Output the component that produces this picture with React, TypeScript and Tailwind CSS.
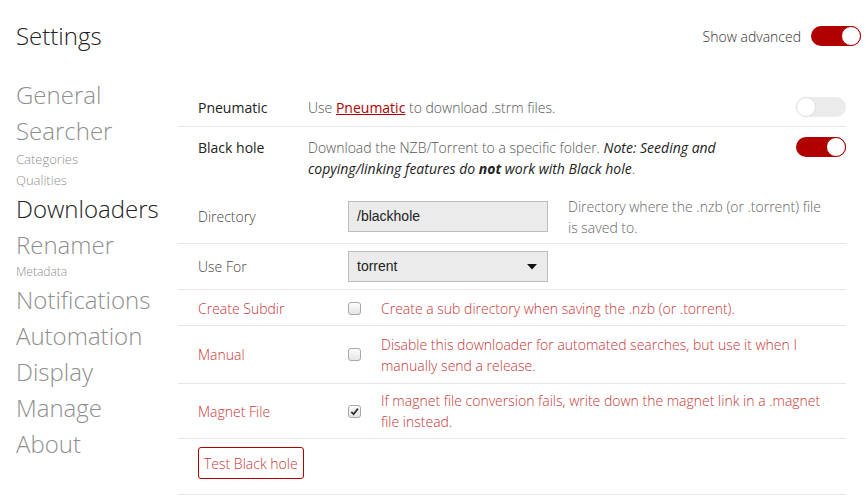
import React from "react";

function Toggle({ on }: { on: boolean }) {
  return (
    <div
      className={
        "relative w-[50px] h-[20px] rounded-full " +
        (on ? "bg-[#b00000]" : "bg-[#ebebeb]")
      }
    >
      <div
        className={
          "absolute top-0 w-[20px] h-[20px] rounded-full bg-white border " +
          (on ? "right-0 border-[#b00000]" : "left-0 border-[#e0e0e0]")
        }
      />
    </div>
  );
}

function Check({ checked }: { checked?: boolean }) {
  return (
    <div className="w-[13px] h-[13px] rounded-[3px] border border-[#a9a9a9] bg-gradient-to-b from-[#fdfdfd] to-[#e4e4e4] flex items-center justify-center">
      {checked && (
        <svg width="9" height="9" viewBox="0 0 10 10">
          <path d="M1.5 5.5 L4 8 L8.8 1.8" fill="none" stroke="#333" strokeWidth="2" />
        </svg>
      )}
    </div>
  );
}

const big = "text-[24px] leading-[36px] font-light";
const small = "font-light";

export default function App() {
  return (
    <div
      className="w-[866px] h-[496px] overflow-hidden bg-white text-[#222]"
      style={{ fontFamily: '"Open Sans", "Liberation Sans", sans-serif' }}
    >
      <div className="flex items-center justify-between pl-4 pr-[5px] pt-[16px] h-[56px]">
        <div className="text-[24px] leading-[40px] font-light text-[#222]">Settings</div>
        <div className="flex items-center gap-[10px]">
          <span className="text-[14px] font-light text-[#333]">Show advanced</span>
          <Toggle on />
        </div>
      </div>
      <div className="flex">
        <div className="w-[178px] pl-4 pt-[21px] text-[#8f8f8f]">
          <div className={big}>General</div>
          <div className={big}>Searcher</div>
          <div className={small + " text-[13px] leading-[21px]"}>Categories</div>
          <div className={small + " text-[13px] leading-[21px]"}>Qualities</div>
          <div className={big + " text-[#222]"}>Downloaders</div>
          <div className={big}>Renamer</div>
          <div className={small + " text-[12px] leading-[18px]"}>Metadata</div>
          <div className={big + " mt-[1px]"}>Notifications</div>
          <div className={big}>Automation</div>
          <div className={big}>Display</div>
          <div className={big}>Manage</div>
          <div className={big}>About</div>
        </div>
        <div className="flex-1 mr-[20px] pt-[32px] text-[14px]">
          {/* Pneumatic */}
          <div className="flex items-center pl-[20px] h-[39px] border-b border-[#e6e6e6]">
            <div className="w-[110px] text-[#222]">Pneumatic</div>
            <div className="flex-1 font-light text-[#555]">
              Use <span className="underline text-[#b00000] font-normal">Pneumatic</span> to download .strm files.
            </div>
            <Toggle on={false} />
          </div>
          {/* Black hole */}
          <div className="flex items-start pl-[20px] pt-[10px] h-[63px] leading-[21px]">
            <div className="w-[110px] text-[#222]">Black hole</div>
            <div className="flex-1 font-light text-[#555] whitespace-nowrap">
              Download the NZB/Torrent to a specific folder.{" "}
              <em className="font-normal text-[#222]">Note: Seeding and</em>
              <br />
              <em className="font-normal text-[#222]">
                copying/linking features do <strong className="font-bold">not</strong> work with Black hole
              </em>
              .
            </div>
            <Toggle on />
          </div>
          {/* Directory */}
          <div className="flex items-center pl-[20px] h-[54px] border-b border-[#e6e6e6]">
            <div className="w-[150px] font-light text-[#444]">Directory</div>
            <div className="w-[200px] h-[31px] bg-[#ebebeb] border border-[#bdbdbd] flex items-center px-[8px] text-[#222]" style={{ fontFamily: '"Liberation Sans", Arial, sans-serif' }}>
              /blackhole
            </div>
            <div className="ml-[20px] font-light text-[#666] leading-[21px] whitespace-nowrap">
              Directory where the .nzb (or .torrent) file
              <br />
              is saved to.
            </div>
          </div>
          {/* Use For */}
          <div className="flex items-center pl-[20px] h-[46px] border-b border-[#e6e6e6]">
            <div className="w-[150px] font-light text-[#444]">Use For</div>
            <div className="w-[200px] h-[31px] bg-[#ebebeb] border border-[#bdbdbd] flex items-center justify-between pl-[8px] pr-[10px] text-[#222]" style={{ fontFamily: '"Liberation Sans", Arial, sans-serif' }}>
              <span>torrent</span>
              <svg width="10" height="6" viewBox="0 0 10 6">
                <path d="M0 0 H10 L5 5.5 Z" fill="#111" />
              </svg>
            </div>
          </div>
          {/* Create Subdir */}
          <div className="flex items-center pl-[20px] pt-[2px] h-[36px] leading-[21px] border-b border-[#e6e6e6] text-[#c83737]">
            <div className="w-[150px] font-light">Create Subdir</div>
            <div className="w-[33px]">
              <Check />
            </div>
            <div className="font-light">Create a sub directory when saving the .nzb (or .torrent).</div>
          </div>
          {/* Manual */}
          <div className="flex items-center pl-[20px] h-[58px] leading-[21px] border-b border-[#e6e6e6] text-[#c83737]">
            <div className="w-[150px] font-light">Manual</div>
            <div className="w-[33px]">
              <Check />
            </div>
            <div className="font-light whitespace-nowrap">
              Disable this downloader for automated searches, but use it when I
              <br />
              manually send a release.
            </div>
          </div>
          {/* Magnet File */}
          <div className="flex items-center pl-[20px] h-[55px] leading-[21px] border-b border-[#e6e6e6] text-[#c83737]">
            <div className="w-[150px] font-light">Magnet File</div>
            <div className="w-[33px]">
              <Check checked />
            </div>
            <div className="font-light whitespace-nowrap">
              If magnet file conversion fails, write down the magnet link in a .magnet
              <br />
              file instead.
            </div>
          </div>
          {/* Test button */}
          <div className="pl-[20px] pt-[8px] h-[56px] border-b border-[#e6e6e6]">
            <button className="h-[32px] px-[5px] whitespace-nowrap border border-[#b00000] rounded-[3px] text-[#c83737] font-light text-[14px] bg-white">
              Test Black hole
            </button>
          </div>
        </div>
      </div>
    </div>
  );
}
